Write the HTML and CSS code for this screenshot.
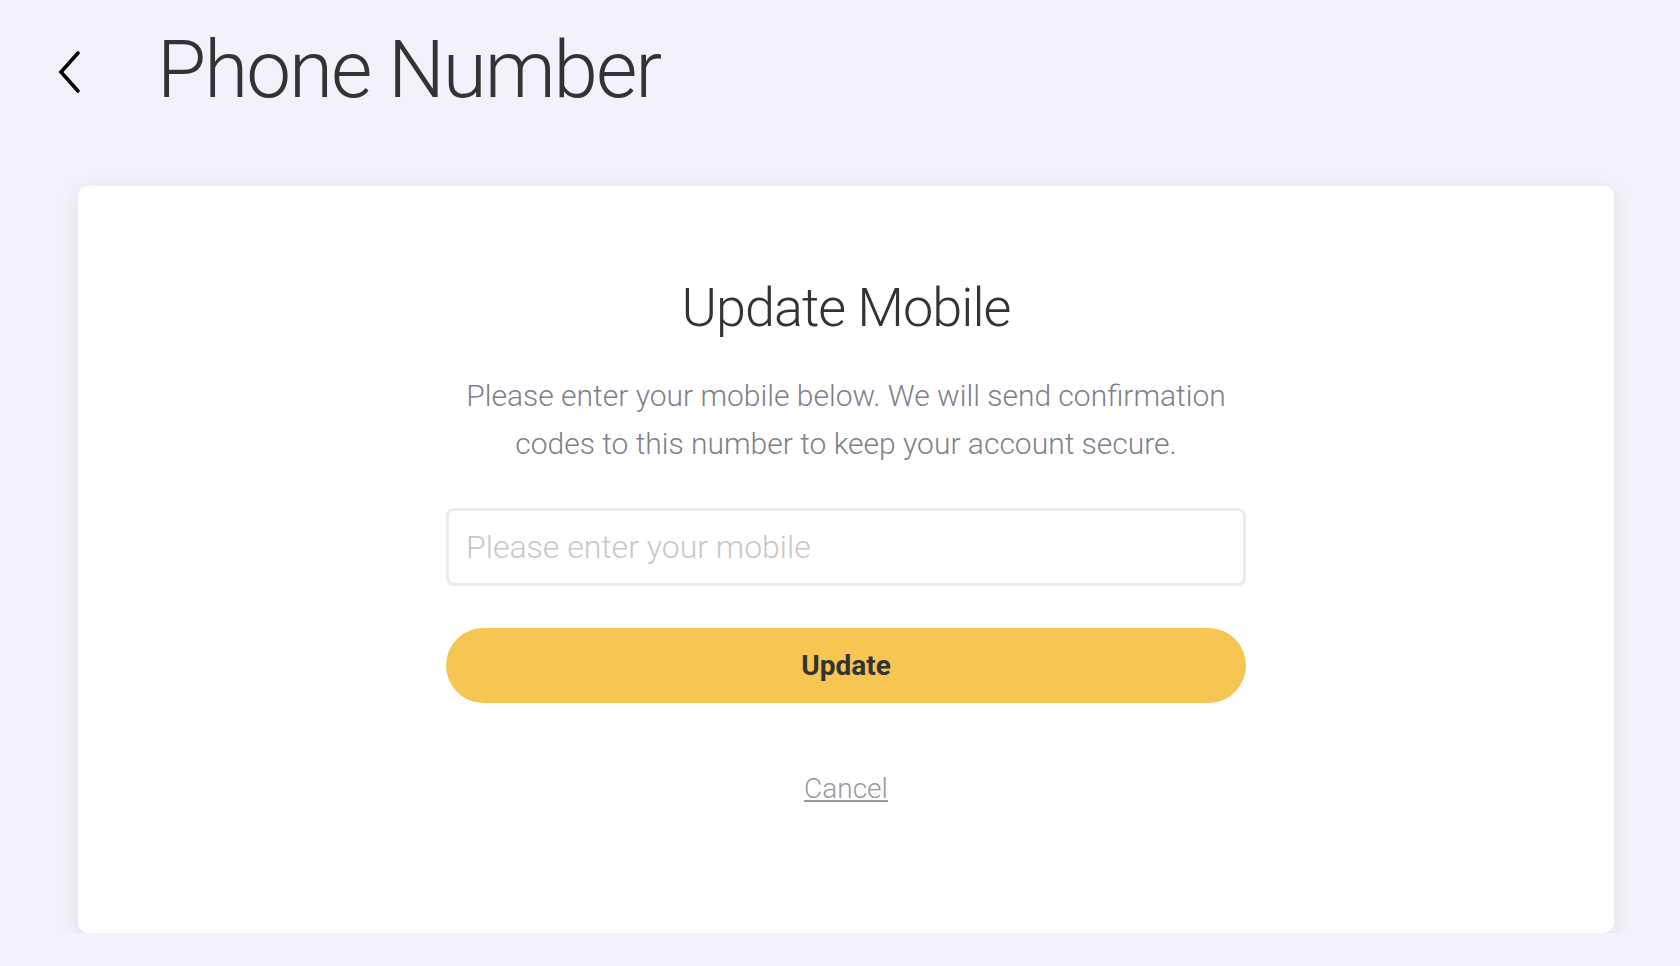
FILE: index.html
```html
<!DOCTYPE html>
<html lang="en">
<head>
<meta charset="utf-8">
<title>Phone Number</title>
<link rel="stylesheet" href="styles.css">
</head>
<body>
<header class="topbar">
  <a class="back" href="#" aria-label="Back">
    <svg width="26" height="44" viewBox="0 0 26 44"><path d="M21 3 L4 22 L21 41" fill="none" stroke="#000" stroke-width="3.6" stroke-linecap="round" stroke-linejoin="miter"/></svg>
  </a>
  <h1 class="page-title">Phone Number</h1>
</header>
<main class="card">
  <div class="form">
    <h2 class="form-title">Update Mobile</h2>
    <p class="form-desc">Please enter your mobile below. We will send confirmation codes to this number to keep your account secure.</p>
    <input class="field" type="tel" placeholder="Please enter your mobile">
    <button class="btn" type="button">Update</button>
    <a class="cancel" href="#">Cancel</a>
  </div>
</main>
</body>
</html>
```
FILE: styles.css
```css
html, body {
  margin: 0;
  padding: 0;
}
body {
  background: #f2f2fc;
  font-family: Roboto, "Liberation Sans", sans-serif;
  color: #333;
}
.topbar {
  display: flex;
  align-items: center;
  height: 144px;
  padding-left: 57px;
  box-sizing: border-box;
}
.back {
  display: flex;
  width: 26px;
  height: 44px;
}
.page-title {
  margin: 0 0 0 74px;
  font-weight: 300;
  font-size: 80px;
  letter-spacing: -2px;
  line-height: 1;
  color: #333;
  position: relative;
  top: -2px;
}
.card {
  margin: 42px 66px 0 78px;
  height: 747px;
  background: #fff;
  border-radius: 10px;
  box-shadow: 0 6px 20px rgba(60, 60, 110, 0.10);
  display: flex;
  justify-content: center;
}
.form {
  width: 800px;
  display: flex;
  flex-direction: column;
  align-items: center;
  padding-top: 90px;
}
.form-title {
  margin: 0;
  font-weight: 300;
  font-size: 54px;
  letter-spacing: -1px;
  line-height: 64px;
  color: #333;
}
.form-desc {
  margin: 32px 0 0;
  font-weight: 300;
  font-size: 30px;
  line-height: 48px;
  color: #80808a;
  text-align: center;
  width: 800px;
}
.field {
  margin-top: 40px;
  width: 800px;
  height: 78px;
  box-sizing: border-box;
  border: 3px solid #ececec;
  border-radius: 8px;
  padding: 0 17px;
  font-family: Roboto, "Liberation Sans", sans-serif;
  font-weight: 300;
  font-size: 32px;
  color: #333;
  outline: none;
}
.field::placeholder {
  color: #c8c8c8;
}
.btn {
  margin-top: 42px;
  width: 800px;
  height: 75px;
  border: none;
  border-radius: 38px;
  background: #f6c552;
  font-family: Roboto, "Liberation Sans", sans-serif;
  font-weight: 700;
  font-size: 28px;
  color: #333;
}
.cancel {
  margin-top: 69px;
  font-weight: 300;
  font-size: 28px;
  color: #999;
  text-decoration: underline;
}
```
